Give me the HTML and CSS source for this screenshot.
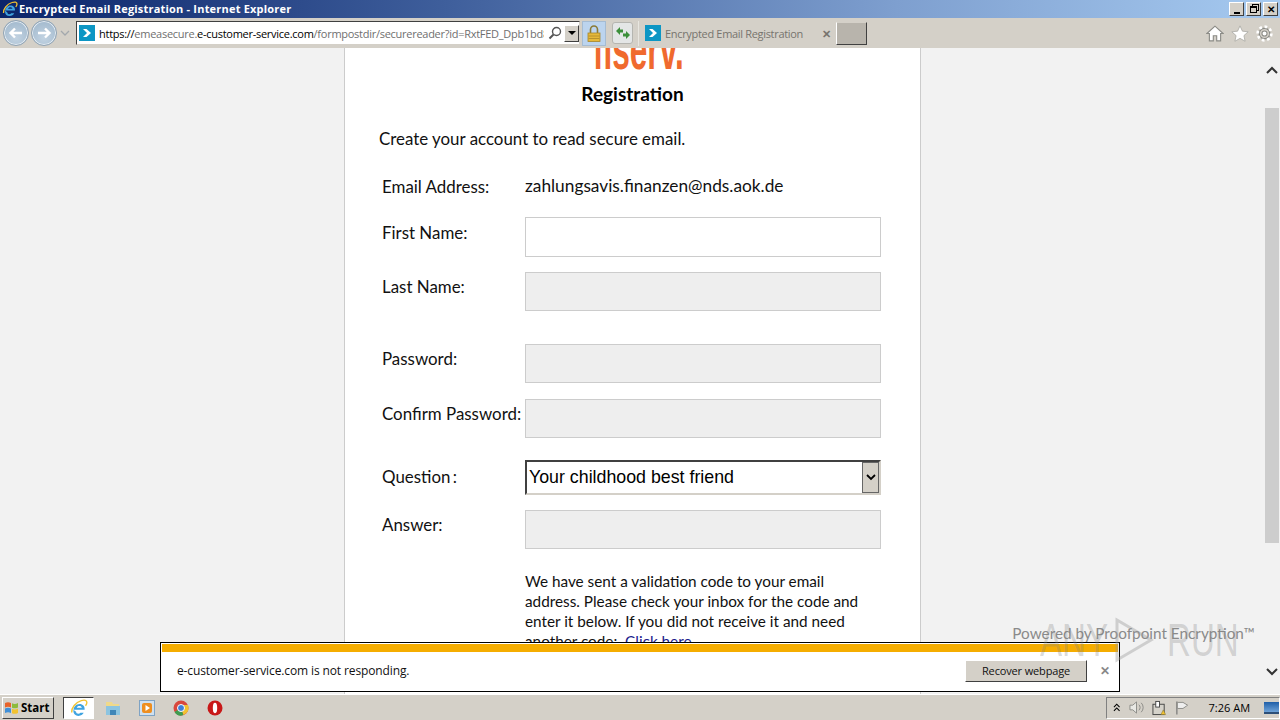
FILE: index.html
```html
<!DOCTYPE html>
<html lang="en">
  <head>
    <meta charset="UTF-8" />
    <title>Encrypted Email Registration - Internet Explorer</title>
    <link rel="stylesheet" href="styles.css">
  </head>
  <body>
    <div class="titlebar">
      <svg class="ie-icon" width="16" height="16" viewBox="0 0 16 16">
        <path d="M3 9.500h10c.3-3-1.700-5-4.500-5-3 0-5.500 2.500-5.500 6 0 3 2 4.500 4.500 4.500 2.200 0 3.800-1 4.700-2.700h-3c-.4.600-1 .9-1.800.9-1.200 0-2-.8-2-1.800zM6 7.800c.2-1 1.200-1.600 2.300-1.600s2 .6 2.200 1.600z" fill="#3fa3e0"/>
        <path d="M1.500 12C1 8 5 3 10 1.500c3-1 5-.3 5 1.500 0 1-.5 2-1.200 3" fill="none" stroke="#f2c230" stroke-width="1.300"/>
      </svg>
      <span class="title-text">Encrypted Email Registration - Internet Explorer</span>
      <div class="win-buttons">
        <span class="win-btn"><i class="glyph-min"></i></span>
        <span class="win-btn"><i class="glyph-restore"></i></span>
        <span class="win-btn glyph-close">✕</span>
      </div>
    </div>

    <div class="toolbar">
      <span class="nav-btn"><svg width="16" height="14" viewBox="0 0 16 14"><path d="M14 7H3M7 2.500 2.500 7 7 11.500" fill="none" stroke="#fff" stroke-width="2.400"/></svg></span>
      <span class="nav-btn nav-next"><svg width="16" height="14" viewBox="0 0 16 14"><path d="M2 7h11M9 2.500 13.500 7 9 11.500" fill="none" stroke="#fff" stroke-width="2.400"/></svg></span>
      <svg class="nav-drop" width="10" height="6" viewBox="0 0 10 6"><path d="M1 1l4 4 4-4" fill="none" stroke="#a3a8ad" stroke-width="1.300"/></svg>

      <div class="addressbar">
        <span class="site-icon"><svg width="10" height="10" viewBox="0 0 10 10"><path d="M1 1h3.500L9 5 4.500 9H1l4-4z" fill="#fff"/></svg></span>
        <span class="url">https://<span class="faded">emeasecure.</span>e-customer-service.com<span class="faded">/formpostdir/securereader?id=RxtFED_Dpb1bd8</span></span>
        <svg class="search-icon" width="14" height="14" viewBox="0 0 14 14"><circle cx="8.500" cy="5.500" r="4" fill="none" stroke="#555" stroke-width="1.400"/><path d="M5.500 8.500 1.500 12.500" stroke="#555" stroke-width="2"/></svg>
        <span class="addr-drop"></span>
      </div>

      <span class="lock-btn"><svg width="14" height="17" viewBox="0 0 14 17"><path d="M3.500 8V4.500a3.500 3.500 0 0 1 7 0V8" fill="none" stroke="#8b7a35" stroke-width="1.600"/><rect x="1" y="8" width="12" height="8.500" fill="#e6b93a" stroke="#a5852a" stroke-width=".8"/><path d="M1.500 11h11M1.500 13.500h11" stroke="#b8922c"/></svg></span>
      <span class="refresh-btn"><svg width="16" height="14" viewBox="0 0 16 14"><path d="M1 5l4-4v2.500h3v3H5V9zM15 9l-4 4v-2.500H8v-3h3V5z" fill="#3c8f3a"/></svg></span>

      <div class="tab">
        <span class="site-icon"><svg width="10" height="10" viewBox="0 0 10 10"><path d="M1 1h3.500L9 5 4.500 9H1l4-4z" fill="#fff"/></svg></span>
        <span class="tab-title">Encrypted Email Registration</span>
        <span class="tab-close">✕</span>
      </div>
      <span class="new-tab"></span>

      <div class="tools">
        <svg width="18" height="17" viewBox="0 0 16 15"><path d="M8 1 .8 7.500H3V14h3.500V9.500h3V14H13V7.500h2.200z" fill="#fff" stroke="#8b8b86"/></svg>
        <svg width="18" height="17" viewBox="0 0 17 16"><path d="M8.500.8l2.300 5 5.400.6-4 3.600 1.100 5.300-4.800-2.700-4.800 2.700 1.100-5.300-4-3.600 5.400-.6z" fill="#fff" stroke="#a5a5a0" stroke-width=".7"/></svg>
        <svg width="17" height="17" viewBox="0 0 16 16"><circle cx="8" cy="8" r="5" fill="none" stroke="#8b8b86" stroke-width="1.300"/><circle cx="8" cy="8" r="6.400" fill="none" stroke="#fff" stroke-width="2.600" stroke-dasharray="2.500 2.500"/><circle cx="8" cy="8" r="2.400" fill="#fff" stroke="#8b8b86"/></svg>
      </div>
    </div>

    <div class="viewport">
      <div class="page">
        <div class="card">
          <div class="logo"><span class="logo-text">fiserv.</span></div>
          <h1>Registration</h1>
          <p class="intro">Create your account to read secure email.</p>

          <form class="reg-form">
            <div class="row row-email">
              <label>Email Address:</label>
              <span class="email-value">zahlungsavis.finanzen@nds.aok.de</span>
            </div>
            <div class="row row-first">
              <label>First Name:</label>
              <input type="text" class="field field-active" />
            </div>
            <div class="row row-last">
              <label>Last Name:</label>
              <input type="text" class="field" disabled />
            </div>
            <div class="row row-pass">
              <label>Password:</label>
              <input type="password" class="field" disabled />
            </div>
            <div class="row row-confirm">
              <label>Confirm Password:</label>
              <input type="password" class="field" disabled />
            </div>
            <div class="row row-question">
              <label>Question :</label>
              <div class="select-box">
                <span>Your childhood best friend</span>
                <span class="select-arrow"><svg width="10" height="7" viewBox="0 0 10 7"><path d="M1 1l4 4 4-4" fill="none" stroke="#000" stroke-width="1.800"/></svg></span>
              </div>
            </div>
            <div class="row row-answer">
              <label>Answer:</label>
              <input type="text" class="field" disabled />
            </div>
            <p class="note">We have sent a validation code to your email address. Please check your inbox for the code and enter it below. If you did not receive it and need another code:&nbsp; <a href="#">Click here</a></p>
          </form>
        </div>
        <div class="powered">Powered by Proofpoint Encryption™</div>
      </div>

      <div class="scrollbar">
        <svg class="scroll-arrow" width="12" height="8" viewBox="0 0 12 8"><path d="M1 7l5-5 5 5" fill="none" stroke="#333" stroke-width="2"/></svg>
        <div class="scroll-track"><div class="scroll-thumb"></div></div>
        <svg class="scroll-arrow" width="12" height="8" viewBox="0 0 12 8"><path d="M1 1l5 5 5-5" fill="none" stroke="#333" stroke-width="2"/></svg>
      </div>

      <div class="notify">
        <div class="notify-bar"></div>
        <div class="notify-body">
          <span class="notify-text">e-customer-service.com is not responding.</span>
          <button type="button" class="recover">Recover webpage</button>
          <span class="notify-close">✕</span>
        </div>
      </div>

      <div class="watermark"><span>ANY</span><svg width="40" height="46" viewBox="0 0 40 46"><path d="M3 3 37 23 3 43z" fill="none" stroke="#9a9a9a" stroke-width="3"/></svg><span>RUN</span></div>
    </div>

    <div class="taskbar">
      <button type="button" class="start">
        <svg width="16" height="15" viewBox="0 0 16 15"><path d="M1 3c2-1 4-1 6 0v4.500c-2-1-4-1-6 0z" fill="#e8632a"/><path d="M8 3.300c2 1 4 .8 6-.3v4.500c-2 1-4 1.200-6 .3z" fill="#8dbb3c"/><path d="M1 8.500c2-1 4-1 6 0V13c-2-1-4-1-6 0z" fill="#3f8fd8"/><path d="M8 8.800c2 1 4 .8 6-.3V13c-2 1-4 1.200-6 .3z" fill="#f2c230"/></svg>
        Start
      </button>
      <span class="task-item task-ie">
        <svg width="18" height="18" viewBox="0 0 16 16"><path d="M3 9.500h10c.3-3-1.700-5-4.500-5-3 0-5.500 2.500-5.500 6 0 3 2 4.500 4.500 4.500 2.200 0 3.800-1 4.700-2.700h-3c-.4.600-1 .9-1.800.9-1.200 0-2-.8-2-1.800zM6 7.800c.2-1 1.200-1.600 2.300-1.600s2 .6 2.200 1.600z" fill="#3fa3e0"/><path d="M1.500 12C1 8 5 3 10 1.500c3-1 5-.3 5 1.500 0 1-.5 2-1.200 3" fill="none" stroke="#f2c230" stroke-width="1.200"/></svg>
      </span>
      <span class="task-item">
        <svg width="16" height="16" viewBox="0 0 16 16"><path d="M1 2h6l1 2h6v5H1z" fill="#f0d98a"/><path d="M1 6h14v9H1z" fill="#8cc4e0"/><path d="M5 15v-5h6v5z" fill="#3f86b8"/></svg>
      </span>
      <span class="task-item">
        <svg width="16" height="16" viewBox="0 0 16 16"><rect x=".5" y=".5" width="15" height="15" fill="#cfe0f0" stroke="#7fa3c4"/><rect x="3" y="3" width="10" height="10" rx="2" fill="#ee8e1f"/><path d="M6.500 5v6L11 8z" fill="#fff"/></svg>
      </span>
      <span class="task-item">
        <svg width="16" height="16" viewBox="0 0 16 16"><circle cx="8" cy="8" r="7.500" fill="#d9473c"/><path d="M8 8 1.500 12a7.500 7.500 0 0 0 9 3z" fill="#3f9c4f"/><path d="M8 8l2.500 7a7.500 7.500 0 0 0 4.500-10H8z" fill="#f2c230"/><circle cx="8" cy="8" r="3.500" fill="#3f7fd8" stroke="#fff"/></svg>
      </span>
      <span class="task-item">
        <svg width="16" height="16" viewBox="0 0 16 16"><circle cx="8" cy="8" r="7.500" fill="#c81818"/><ellipse cx="8" cy="8" rx="2.200" ry="5.200" fill="#fff"/></svg>
      </span>

      <div class="tray">
        <svg width="8" height="9" viewBox="0 0 8 9"><path d="M1 4l3-3 3 3M1 8l3-3 3 3" fill="none" stroke="#000" stroke-width="1.200"/></svg>
        <svg width="17" height="15" viewBox="0 0 17 15"><path d="M1 5h3l4-3.500v12L4 10H1z" fill="#e8e8e4" stroke="#8b8b86"/><path d="M10.500 4.500a4 4 0 0 1 0 6M13 2.500a7 7 0 0 1 0 10" fill="none" stroke="#8b8b86"/></svg>
        <svg width="15" height="16" viewBox="0 0 15 16"><rect x="1" y="4" width="12" height="11" fill="#d5d2ca" stroke="#444"/><rect x="4" y="1" width="4" height="6" fill="#fff" stroke="#444"/><path d="M9.500 15 12 10l2.500 5z" fill="#f2c230" stroke="#8b7a35" stroke-width=".6"/></svg>
        <svg width="15" height="16" viewBox="0 0 15 16"><path d="M2 1v14" stroke="#777" stroke-width="1.300"/><path d="M2.500 2h6l5 3-5 3.500h-6z" fill="#eee" stroke="#8b8b86"/></svg>
        <span class="clock">7:26 AM</span>
        <span class="show-desktop"></span>
      </div>
    </div>
  </body>
</html>
```

FILE: styles.css
```css
* {
  box-sizing: border-box;
}
html,
body {
  margin: 0;
  padding: 0;
  height: 720px;
  overflow: hidden;
}
body {
  display: flex;
  flex-direction: column;
  font-family: "Open Sans", sans-serif;
  background: #d4d0c8;
}

/* window chrome */
.titlebar {
  height: 18px;
  display: flex;
  align-items: center;
  padding-left: 2px;
  background: linear-gradient(to right, #0a246a, #3f5f9c 35%, #7e9fcf 70%, #a6caf0);
}
.ie-icon {
  flex: none;
}
.title-text {
  margin: -2px 0 0 1px;
  color: #fff;
  font: bold 11px "Open Sans", sans-serif;
  letter-spacing: 0.2px;
}
.win-buttons {
  margin-left: auto;
  margin-right: 2px;
  display: flex;
  gap: 2px;
}
.win-btn {
  width: 15px;
  height: 14px;
  display: flex;
  align-items: center;
  justify-content: center;
  background: #d4d0c8;
  border: 1px solid;
  border-color: #fff #404040 #404040 #fff;
  color: #000;
  font-size: 10px;
  font-weight: bold;
}
.glyph-min {
  width: 6px;
  height: 2px;
  background: #000;
  margin-top: 7px;
}
.glyph-restore {
  width: 7px;
  height: 7px;
  border: 1px solid #000;
  border-top-width: 2px;
  box-shadow: 2px -2px 0 -1px #d4d0c8, 2px -2px 0 0 #000;
}

.toolbar {
  height: 30px;
  display: flex;
  align-items: center;
  padding-left: 3px;
  background: #d4d0c8;
}
.nav-btn {
  width: 26px;
  height: 26px;
  border-radius: 50%;
  display: flex;
  align-items: center;
  justify-content: center;
  background: radial-gradient(circle at 50% 70%, #c2d3e2, #9cb4c9);
  border: 1px solid #8fa3b5;
  box-shadow: inset 0 0 0 1px #e6edf3;
}
.nav-next {
  margin-left: 2px;
}
.nav-drop {
  margin-left: 3px;
  margin-right: 6px;
}
.addressbar {
  width: 504px;
  height: 24px;
  display: flex;
  align-items: center;
  background: #fff;
  border: 1px solid;
  border-color: #404040 #d4d0c8 #d4d0c8 #404040;
  padding-left: 2px;
}
.site-icon {
  width: 16px;
  height: 16px;
  flex: none;
  display: flex;
  align-items: center;
  justify-content: center;
  background: #0d96c4;
}
.url {
  margin-left: 4px;
  width: 447px;
  overflow: hidden;
  white-space: nowrap;
  font: 11px "Open Sans", sans-serif;
  letter-spacing: -0.27px;
  color: #000;
}
.faded {
  color: #6f6f6f;
}
.search-icon {
  margin-left: 4px;
  flex: none;
}
.addr-drop {
  width: 15px;
  height: 17px;
  margin-left: 2px;
  flex: none;
  background: #d4d0c8;
  border: 1px solid;
  border-color: #fff #404040 #404040 #fff;
  position: relative;
}
.addr-drop::after {
  content: "";
  position: absolute;
  left: 3px;
  top: 5px;
  border: 4px solid transparent;
  border-top: 4px solid #000;
}
.lock-btn {
  width: 24px;
  height: 25px;
  margin-left: 2px;
  display: flex;
  align-items: center;
  justify-content: center;
  background: #bcd4ee;
  border: 1px solid #a5bcd3;
}
.refresh-btn {
  width: 21px;
  height: 22px;
  margin-left: 6px;
  display: flex;
  align-items: center;
  justify-content: center;
  background: #e4e6e6;
  border: 1px solid #b5b5b0;
  border-radius: 3px;
}
.tab {
  width: 198px;
  height: 25px;
  margin-left: 5px;
  padding-left: 6px;
  display: flex;
  align-items: center;
  border-left: 1px solid #e8e6e0;
}
.tab-title {
  margin-left: 4px;
  font: 11px "Open Sans", sans-serif;
  letter-spacing: -0.32px;
  color: #77746e;
  white-space: nowrap;
}
.tab-close {
  margin-left: auto;
  margin-right: 5px;
  color: #77746e;
  font-size: 11px;
  font-weight: bold;
}
.new-tab {
  width: 31px;
  height: 23px;
  background: #b8b4ac;
  border: 1px solid;
  border-color: #404040 #404040 #404040 #fff;
  border-top-color: #d4d0c8;
}
.tools {
  margin-left: auto;
  margin-right: 7px;
  display: flex;
  align-items: center;
  gap: 7px;
}

/* page */
.viewport {
  height: 646px;
  position: relative;
  display: flex;
  overflow: hidden;
  background: #f2f2f2;
}
.page {
  flex: 1;
  position: relative;
  overflow: hidden;
}
.card {
  width: 577px;
  height: 646px;
  margin-left: 344px;
  background: #fff;
  border-left: 1px solid #ccc;
  border-right: 1px solid #ccc;
  font-family: Lato, sans-serif;
  color: #111;
  overflow: hidden;
}
.logo {
  height: 26px;
  overflow: hidden;
  display: flex;
  justify-content: center;
  align-items: flex-end;
  padding-left: 12px;
}
.logo-text {
  font: bold 58px/58px "Liberation Sans", sans-serif;
  color: #f06a2e;
  display: block;
  margin-bottom: -4px;
  transform: scaleX(0.545);
}
h1 {
  margin: 9px 0 0;
  text-align: center;
  font-size: 19px;
  line-height: 22px;
  font-weight: bold;
  color: #000;
}
.intro {
  margin: 23px 0 0 34px;
  font-size: 16.900px;
  line-height: 22px;
}
.reg-form {
  margin: 0;
  padding-left: 37px;
}
.row {
  display: grid;
  grid-template-columns: 143px 356px;
  font-size: 16.900px;
  line-height: 22px;
}
.row label {
  white-space: nowrap;
}
.email-value {
  font-size: 17.300px;
}
.row-email {
  margin-top: 25px;
}
.row-email label {
  margin-top: 1px;
}
.row-first {
  margin-top: 19px;
}
.row-first label {
  margin-top: 5px;
}
.row-last {
  margin-top: 15px;
}
.row-last label {
  margin-top: 4px;
}
.row-pass {
  margin-top: 33px;
}
.row-pass label {
  margin-top: 4px;
}
.row-confirm {
  margin-top: 16px;
}
.row-confirm label {
  margin-top: 4px;
}
.row-question {
  margin-top: 22px;
}
.row-question label {
  margin-top: 6px;
  word-spacing: -2px;
}
.row-answer {
  margin-top: 15px;
}
.row-answer label {
  margin-top: 4px;
}
.field {
  display: block;
  width: 356px;
  height: 39px;
  margin: 0;
  border: 1px solid #ccc;
  background: #eee;
}
.field-active {
  height: 40px;
  background: #fff;
}
.select-box {
  width: 356px;
  height: 35px;
  display: flex;
  align-items: center;
  padding-left: 2px;
  background: #fff;
  border: 2px solid;
  border-color: #404040 #d4d0c8 #d4d0c8 #404040;
  font: 17.800px "Liberation Sans", sans-serif;
  color: #000;
}
.select-arrow {
  width: 17px;
  height: 31px;
  margin-left: auto;
  display: flex;
  align-items: center;
  justify-content: center;
  background: #d4d0c8;
  border: 1px solid #666;
}
.note {
  width: 345px;
  margin: 22px 0 0 143px;
  font-size: 15.300px;
  line-height: 20px;
}
.note a {
  color: #1a1a8c;
  text-decoration: none;
}
.powered {
  position: absolute;
  right: 9px;
  top: 575px;
  font-family: Lato, sans-serif;
  font-size: 15.300px;
  line-height: 20px;
  color: #8a8a8a;
}

.scrollbar {
  width: 16px;
  flex: none;
  display: flex;
  flex-direction: column;
  align-items: center;
  background: #f2f2f2;
}
.scroll-arrow {
  flex: none;
  margin: 18px 0 34px;
}
.scroll-arrow:last-child {
  margin: 0;
  position: absolute;
  bottom: 18px;
}
.scroll-track {
  flex: 1;
  width: 100%;
}
.scroll-thumb {
  width: 14px;
  height: 435px;
  margin-left: 1px;
  background: #cdcdcd;
}

/* things lying over the page */
.watermark {
  position: absolute;
  left: 1040px;
  top: 569px;
  display: flex;
  align-items: center;
  gap: 8px;
  font: 46px/46px "Liberation Sans", sans-serif;
  color: rgba(130, 130, 130, 0.3);
  pointer-events: none;
}
.watermark span {
  display: block;
  width: 66px;
  transform: scaleX(0.72);
  transform-origin: left center;
  white-space: nowrap;
}
.watermark svg {
  opacity: 0.4;
  margin-right: 5px;
}
.notify {
  position: absolute;
  left: 160px;
  top: 594px;
  width: 960px;
  height: 50px;
  background: #fff;
  border: 1px solid #000;
}
.notify-bar {
  height: 8px;
  margin: 1px 1px 0;
  background: #f5ad00;
}
.notify-body {
  height: 37px;
  display: flex;
  align-items: center;
  padding-left: 16px;
}
.notify-text {
  font: 12px "Open Sans", sans-serif;
  letter-spacing: -0.12px;
  color: #111;
}
.recover {
  width: 122px;
  height: 22px;
  margin-left: auto;
  padding: 0;
  background: #d4d0c8;
  border: 1px solid;
  border-color: #fff #404040 #404040 #fff;
  font: 11px "Open Sans", sans-serif;
  letter-spacing: -0.15px;
  color: #111;
}
.notify-close {
  width: 32px;
  padding-left: 4px;
  text-align: center;
  color: #888;
  font-size: 12px;
  font-weight: bold;
}

/* taskbar */
.taskbar {
  height: 26px;
  display: flex;
  align-items: center;
  padding-left: 2px;
  background: #d4d0c8;
  border-top: 1px solid #fff;
}
.start {
  width: 52px;
  height: 22px;
  display: flex;
  align-items: center;
  gap: 1px;
  padding: 0 0 0 1px;
  background: #d4d0c8;
  border: 1px solid;
  border-color: #fff #404040 #404040 #fff;
  font: bold 11.500px "Open Sans", sans-serif;
  color: #000;
}
.task-item {
  width: 34px;
  height: 22px;
  display: flex;
  align-items: center;
  justify-content: center;
}
.task-ie {
  width: 31px;
  margin: 0 2px 0 9px;
  background: #fff;
  border: 1px solid;
  border-color: #404040 #fff #fff #404040;
}
.tray {
  margin-left: auto;
  width: 174px;
  height: 22px;
  display: flex;
  align-items: center;
  padding-left: 6px;
  gap: 8px;
  border: 1px solid;
  border-color: #808080 #fff #fff #808080;
}
.clock {
  margin-left: 12px;
  font: 11px "Open Sans", sans-serif;
  color: #000;
  white-space: nowrap;
}
.show-desktop {
  width: 16px;
  height: 12px;
  margin-left: 6px;
  background: linear-gradient(#1f5fa8, #6fa3d8);
  border-bottom: 2px solid #2d4f78;
}
```
